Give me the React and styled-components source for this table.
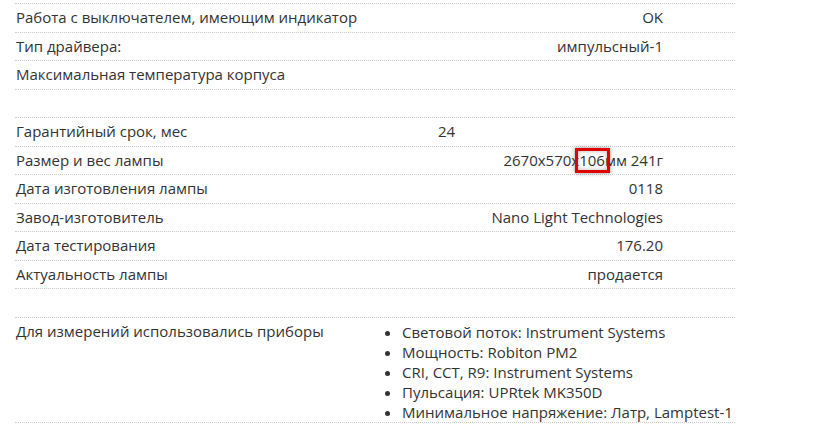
import React from 'react'
import styled, {createGlobalStyle} from 'styled-components'

const GlobalStyle = createGlobalStyle`
  html, body {
    margin: 0;
    padding: 0;
    background: #fff;
  }
  body {
    font-family: "Open Sans", "Liberation Sans", sans-serif;
    font-size: 15px;
    color: #333;
  }
`

const Page = styled.div`
  width: 720px;
  margin-left: 15px;
  padding-top: 3px;
`

const Section = styled.div`
  border-top: 1px dotted #ccc;
  margin-bottom: 27.5px;
`

const Row = styled.div`
  display: grid;
  grid-template-columns: ${p => p.$cols || '423px 225px 1fr'};
  border-bottom: 1px dotted #ccc;
  line-height: 19.5px;
`

const Label = styled.div`
  padding: 4px 0 4px 1px;
`

const Value = styled.div`
  padding: 4px 0;
  text-align: ${p => p.$align || 'right'};
`

const Marked = styled.span`
  position: relative;

  &::after {
    content: '';
    position: absolute;
    left: -4px;
    right: -5px;
    top: -2px;
    bottom: -3px;
    border: 3px solid #e00000;
    box-shadow: 0 0 4px rgba(0, 0, 0, 0.45), inset 0 0 4px rgba(0, 0, 0, 0.3);
  }
`

const Devices = styled.ul`
  margin: 0;
  padding: 4px 0 0 22px;
  list-style: disc;
  line-height: 20px;
`

const first = [
  ['Работа с выключателем, имеющим индикатор', 'OK'],
  ['Тип драйвера:', 'импульсный-1'],
  ['Максимальная температура корпуса', ''],
]

const second = [
  ['Размер и вес лампы', <>2670x570x<Marked>106</Marked>мм 241г</>],
  ['Дата изготовления лампы', '0118'],
  ['Завод-изготовитель', 'Nano Light Technologies'],
  ['Дата тестирования', '176.20'],
  ['Актуальность лампы', 'продается'],
]

const devices = [
  'Световой поток: Instrument Systems',
  'Мощность: Robiton PM2',
  'CRI, CCT, R9: Instrument Systems',
  'Пульсация: UPRtek MK350D',
  'Минимальное напряжение: Латр, Lamptest-1',
]

export default function App() {
  return (
    <Page>
      <GlobalStyle />
      <Section>
        {first.map(([label, value]) => (
          <Row key={label}>
            <Label>{label}</Label>
            <Value>{value}</Value>
          </Row>
        ))}
      </Section>
      <Section>
        <Row>
          <Label>Гарантийный срок, мес</Label>
          <Value $align="left">24</Value>
        </Row>
        {second.map(([label, value]) => (
          <Row key={label}>
            <Label>{label}</Label>
            <Value>{value}</Value>
          </Row>
        ))}
      </Section>
      <Section>
        <Row $cols="365px 1fr">
          <Label>Для измерений использовались приборы</Label>
          <Devices>
            {devices.map(d => (
              <li key={d}>{d}</li>
            ))}
          </Devices>
        </Row>
      </Section>
    </Page>
  )
}
